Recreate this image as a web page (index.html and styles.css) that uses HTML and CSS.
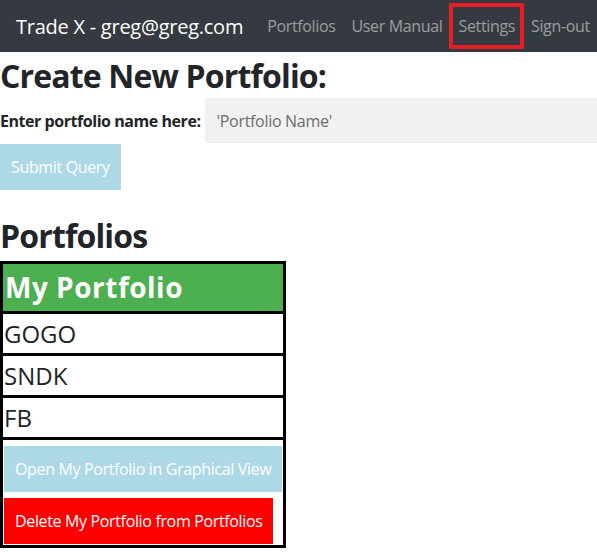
FILE: index.html
```html
<!DOCTYPE html>
<html>
<head>
<meta charset="utf-8">
<link rel="stylesheet" href="styles.css">
</head>
<body>
<nav class="navbar">
  <span class="brand">Trade X - greg@greg.com</span>
  <ul class="nav">
    <li><a class="nav-link">Portfolios</a></li>
    <li><a class="nav-link">User Manual</a></li>
    <li><a class="nav-link marked">Settings</a></li>
    <li><a class="nav-link">Sign-out</a></li>
  </ul>
</nav>
<main class="content">
  <h1 class="title first">Create New Portfolio:</h1>
  <form class="create-form">
    <div class="field-row">
      <label class="field-label">Enter portfolio name here:</label>
      <input class="field-input" type="text" placeholder="'Portfolio Name'">
    </div>
    <button class="btn btn-blue" type="button">Submit Query</button>
  </form>
  <h1 class="title section">Portfolios</h1>
  <table class="portfolio">
    <tr><th class="head">My Portfolio</th></tr>
    <tr><td class="stock">GOGO</td></tr>
    <tr><td class="stock">SNDK</td></tr>
    <tr><td class="stock">FB</td></tr>
    <tr><td class="actions">
      <div class="act"><button class="btn btn-blue" type="button">Open My Portfolio in Graphical View</button></div>
      <div class="act"><button class="btn btn-red" type="button">Delete My Portfolio from Portfolios</button></div>
    </td></tr>
  </table>
</main>
</body>
</html>
```
FILE: styles.css
```css
body {
  margin: 0;
  font-family: "Open Sans", "Noto Sans", sans-serif;
  color: #212529;
  background: #fff;
}
.navbar {
  height: 52px;
  background: #343a40;
  display: flex;
  align-items: center;
  padding: 0 16px;
  white-space: nowrap;
}
.brand {
  color: #fff;
  font-size: 20px;
  margin-right: 16px;
  letter-spacing: -0.25px;
  flex-shrink: 0;
}
.nav {
  list-style: none;
  margin: 0;
  padding: 0;
  display: flex;
  flex-shrink: 0;
}
.nav-link {
  display: block;
  color: rgba(255,255,255,0.5);
  font-size: 16px;
  padding: 12px 8px;
  letter-spacing: -0.35px;
}
.marked {
  outline: 4px solid #e81c24;
  outline-offset: -4px;
  padding: 12px 9px;
  margin: 0 -1px;
}
.content {
  display: block;
}
.title {
  font-size: 32px;
  font-weight: 700;
  margin: 0;
  line-height: 44px;
  letter-spacing: -0.85px;
}
.first {
  padding-top: 2px;
}
.create-form {
  margin: 0;
}
.field-row {
  display: flex;
  align-items: center;
  gap: 4px;
}
.field-label {
  font-weight: 700;
  font-size: 16px;
  letter-spacing: -0.45px;
}
.field-input {
  flex: 1;
  height: 45px;
  box-sizing: border-box;
  border: none;
  background: #f1f1f1;
  padding: 0 12px;
  font-family: inherit;
  font-size: 16px;
  color: #555;
  letter-spacing: -0.3px;
}
.field-input::placeholder {
  color: #6c6c6c;
}
.btn {
  border: none;
  color: #fff;
  font-family: inherit;
  font-size: 16px;
  line-height: 22px;
  padding: 12px 11px;
  letter-spacing: -0.35px;
}
.btn-blue { background: #add8e6; }
.btn-red { background: #ff0000; }
.create-form .btn { margin-top: 1px; }
.section {
  margin-top: 24px;
  margin-bottom: 3px;
}
.portfolio {
  border-collapse: collapse;
  border: 3px solid #000;
}
.portfolio th, .portfolio td {
  border: 3px solid #000;
  padding: 1px;
  text-align: left;
}
.head {
  background: #4caf50;
  color: #fff;
  font-size: 28px;
  line-height: 45px;
  padding-left: 2px !important;
  letter-spacing: 0.5px;
}
.stock {
  font-size: 24px;
  line-height: 37px;
  font-weight: 400;
  padding-left: 1px !important;
}
.actions { padding-top: 6px !important; }
.act + .act { margin-top: 6px; }
```
